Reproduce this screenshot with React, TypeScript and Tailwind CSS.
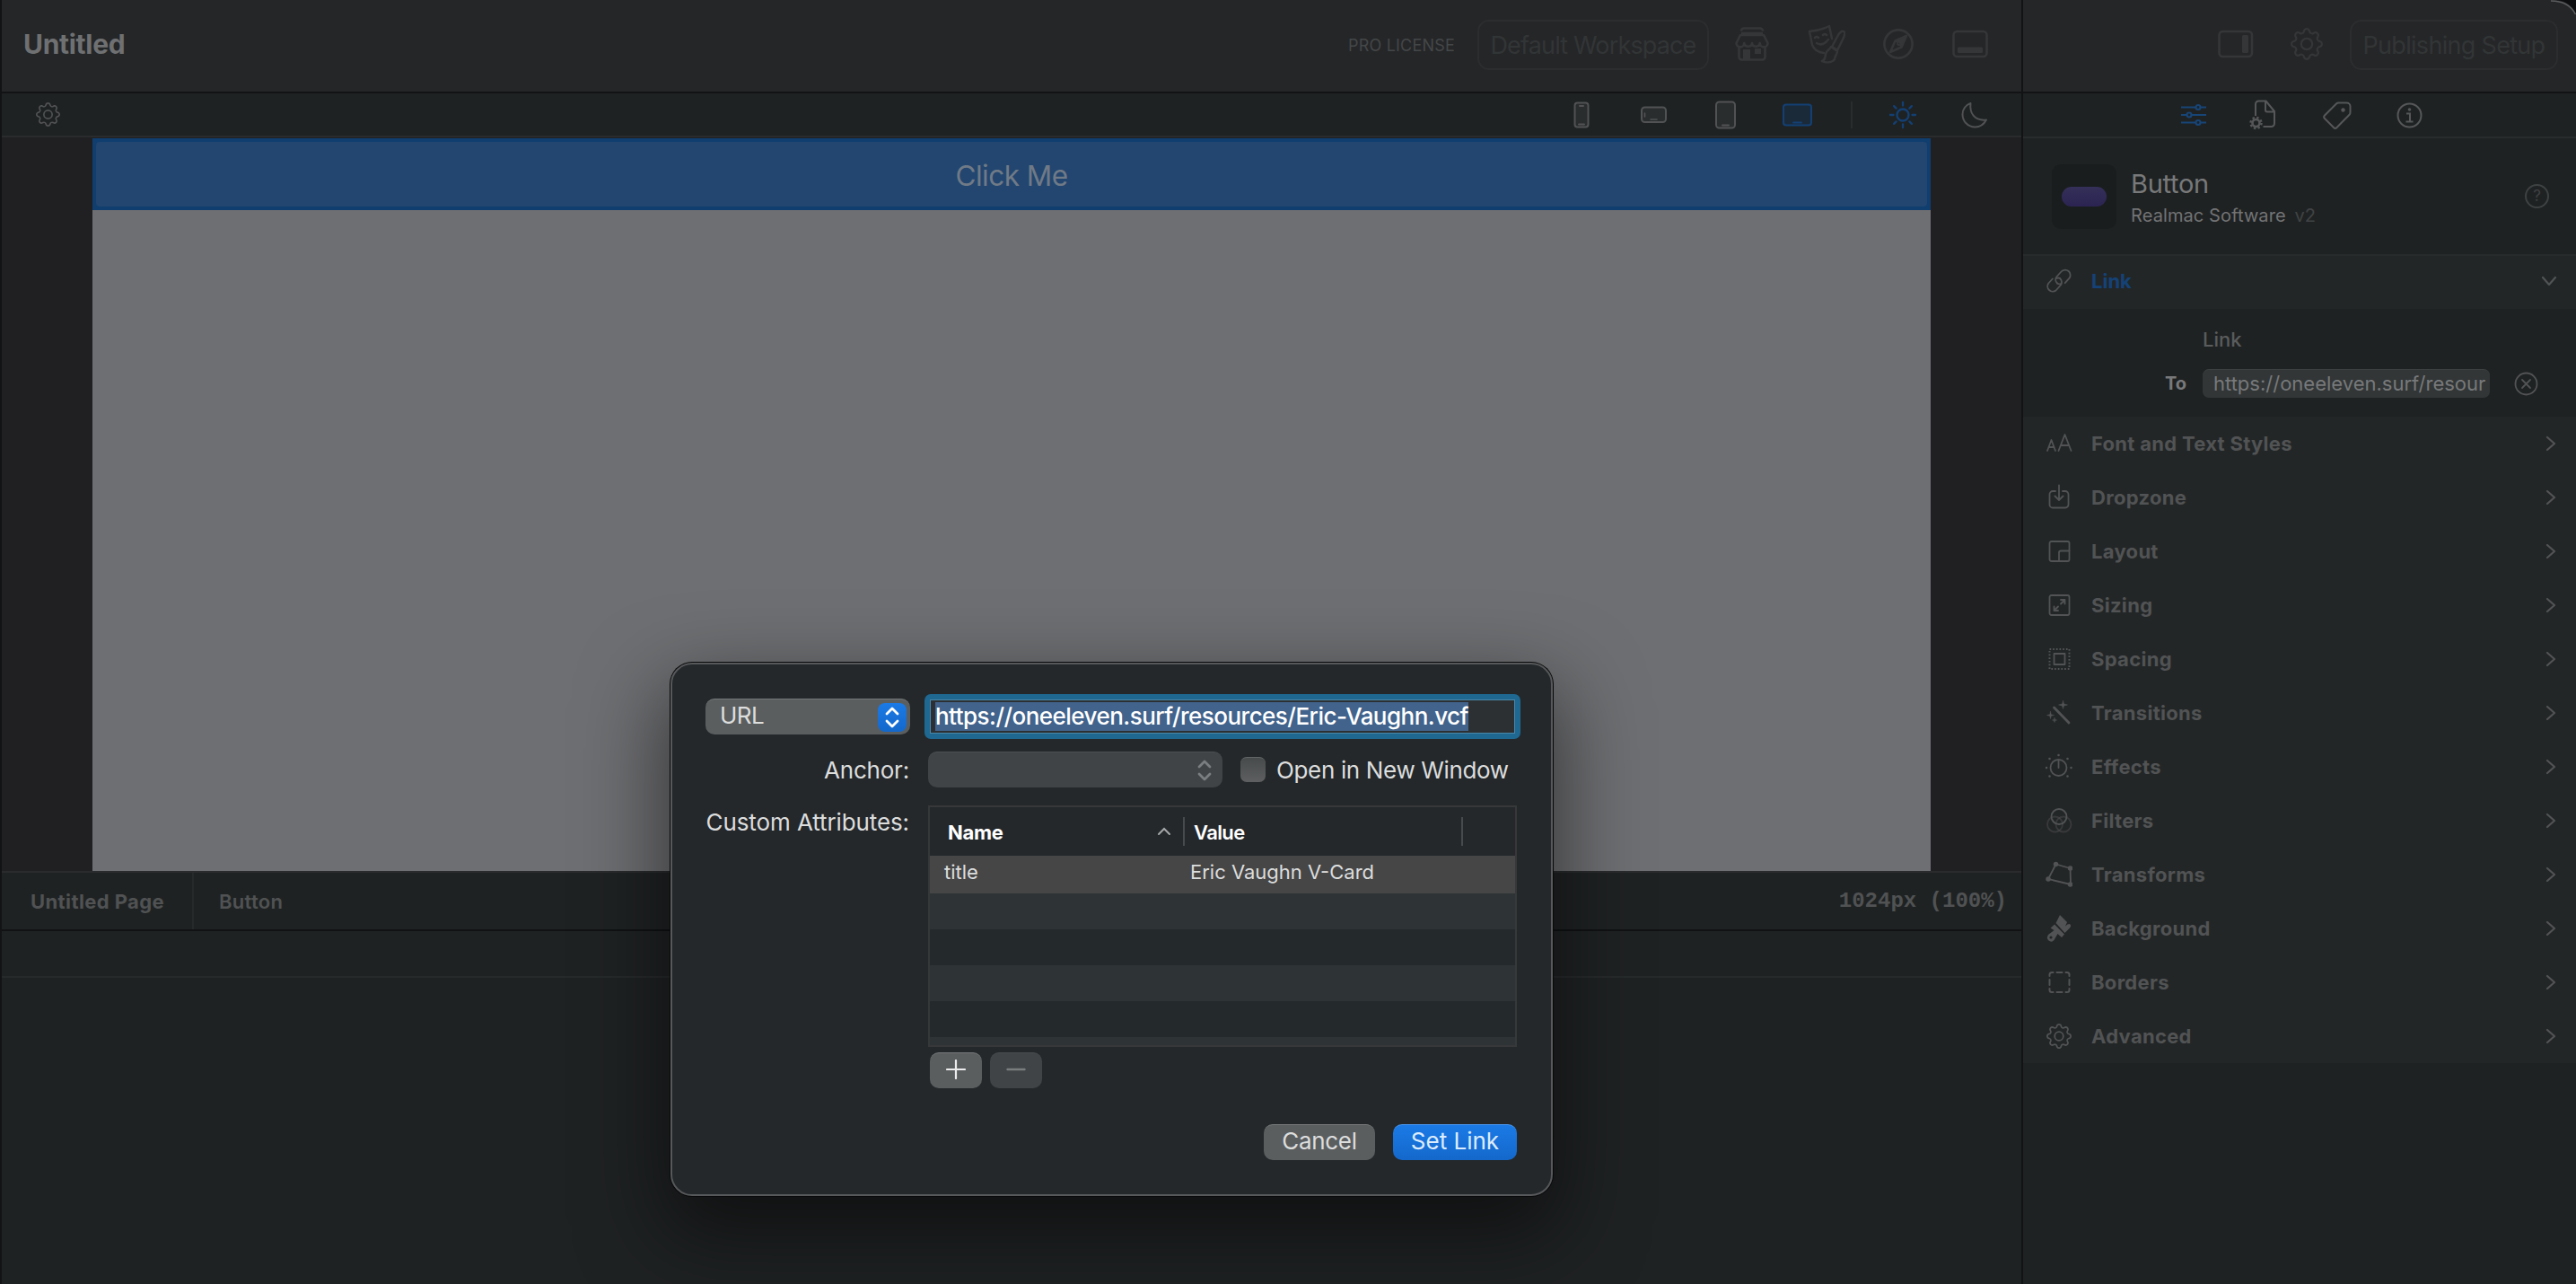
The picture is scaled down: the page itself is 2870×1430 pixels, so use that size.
import React, { useState } from 'react';
import { BsGear } from 'react-icons/bs';

interface IconProps {
  className?: string;
}

const StoreIcon = () => (
  <svg width="38" height="38" viewBox="0 0 38 38" fill="none" stroke="currentColor" strokeWidth="2.6" strokeLinejoin="round">
    <path d="M7 4.500a3 3 0 0 1 3-3h18a3 3 0 0 1 3 3M7 7h24M6 9h26l4.500 9a4.400 4.400 0 0 1-8.800 0 4.400 4.400 0 0 1-8.700 0 4.400 4.400 0 0 1-8.700 0 4.400 4.400 0 0 1-8.800 0z" />
    <path d="M4.500 22v11.500a3 3 0 0 0 3 3h23a3 3 0 0 0 3-3V22" />
    <path d="M9 25h8v11H9zM22 24h7v6h-7z" fill="currentColor" stroke="none" />
  </svg>
);

const ThemeIcon = () => (
  <svg width="42" height="44" viewBox="0 0 42 44" fill="none" stroke="currentColor" strokeWidth="2.5" strokeLinecap="round" strokeLinejoin="round">
    <path d="M2 8Q14 7 24 2l3 14M2 8l3 15q3 8 13 9" />
    <path d="M8 15q2-2 4 0M17 12q2-2 4 0M10 21q7 4 13-4" />
    <path d="M40 8c2 1 1 5-1 9l-6 12-6-4 7-13c2-3 4-5 6-4zM26 25l7 5c0 4-3 5-3 9-3 4-9 4-14 2 5-2 3-5 4-8 1-4 4-4 6-8z" />
  </svg>
);

const CompassIcon = () => (
  <svg width="36" height="36" viewBox="0 0 36 36" fill="none" stroke="currentColor" strokeWidth="2.6" strokeLinejoin="round">
    <circle cx="18" cy="18" r="15.600" />
    <path d="M27 9l-5.500 12.500L9 27l5.500-12.500z" />
    <path d="M27 9l-6 12-6-6zM18 16.500a1.500 1.500 0 1 0 .1 0z" fill="currentColor" strokeWidth="1" />
  </svg>
);

const BottomPanelIcon = () => (
  <svg width="40" height="32" viewBox="0 0 40 32" fill="none" stroke="currentColor" strokeWidth="2.6">
    <rect x="1.500" y="2" width="37" height="28" rx="4" />
    <rect x="6" y="19.500" width="28" height="6.500" rx="1.500" fill="currentColor" stroke="none" />
  </svg>
);

const SidePanelIcon = () => (
  <svg width="40" height="32" viewBox="0 0 40 32" fill="none" stroke="currentColor" strokeWidth="2.6">
    <rect x="1.500" y="2" width="36.500" height="28" rx="4" />
    <rect x="27" y="6" width="7" height="20" rx="1.500" fill="currentColor" stroke="none" />
  </svg>
);

const PhoneIcon = () => (
  <svg width="18" height="30" viewBox="0 0 18 30" fill="none" stroke="currentColor" strokeWidth="2">
    <rect x="1.500" y="1.500" width="15" height="27" rx="3" fill="#2a2d2e" />
    <path d="M7 5h4M6 25.500h6" strokeLinecap="round" />
  </svg>
);

const PhoneLandscapeIcon = () => (
  <svg width="29" height="20" viewBox="0 0 29 20" fill="none" stroke="currentColor" strokeWidth="2">
    <rect x="1" y="1.500" width="27" height="16.500" rx="3.500" fill="#2a2d2e" />
    <path d="M4.500 8v4M11 15h7" strokeWidth="1.600" strokeLinecap="round" />
  </svg>
);

const TabletIcon = () => (
  <svg width="23" height="32" viewBox="0 0 23 32" fill="none" stroke="currentColor" strokeWidth="2">
    <rect x="1" y="1.500" width="21" height="29" rx="3.500" fill="#2a2d2e" />
    <path d="M8 27.500h7" strokeLinecap="round" />
  </svg>
);

const DesktopIcon = () => (
  <svg width="33" height="26" viewBox="0 0 33 26" fill="none" stroke="currentColor" strokeWidth="2">
    <rect x="1" y="1.500" width="31" height="23" rx="3" fill="#1b2a39" />
    <path d="M12 21.500h9" strokeLinecap="round" />
  </svg>
);

const SunIcon = () => (
  <svg width="32" height="32" viewBox="0 0 32 32" fill="none" stroke="currentColor" strokeWidth="2.300" strokeLinecap="round">
    <circle cx="16" cy="16" r="6.500" />
    <path d="M16 2v3.500M16 26.500V30M2 16h3.500M26.500 16H30M6.100 6.100l2.500 2.500M23.400 23.400l2.500 2.500M6.100 25.900l2.500-2.500M23.400 8.600l2.500-2.500" />
  </svg>
);

const MoonIcon = () => (
  <svg width="30" height="30" viewBox="0 0 30 30" fill="none" stroke="currentColor" strokeWidth="2" strokeLinejoin="round">
    <path d="M10.500 2C9 13 15 22 28 20.500 25 26 20.500 28.500 15.500 28.500 7.500 28.500 1.500 22 1.500 14.500 1.500 9 5 4 10.500 2z" />
  </svg>
);

const SlidersIcon = () => (
  <svg width="28" height="26" viewBox="0 0 28 26" fill="none" stroke="currentColor" strokeWidth="2.200">
    <path d="M0 4.500h16M22 4.500h6M0 13h6M12 13h16M0 21.500h16M22 21.500h6" />
    <circle cx="19" cy="4.500" r="2.500" />
    <circle cx="9" cy="13" r="2.500" />
    <circle cx="19" cy="21.500" r="2.500" />
  </svg>
);

const PageGearIcon = () => (
  <svg width="30" height="34" viewBox="0 0 30 34" fill="none" stroke="currentColor" strokeWidth="2" strokeLinejoin="round">
    <path d="M7 18V5a3.500 3.500 0 0 1 3.500-3.500h8L28 13v13.500a3.500 3.500 0 0 1-3.500 3.500H15.500M18 2v9.500q0 2 2 2h8" />
    <circle cx="7.500" cy="26" r="4" strokeWidth="2.600" />
    <circle cx="7.500" cy="26" r="6" strokeWidth="2.400" strokeDasharray="2.350 2.360" />
  </svg>
);

const TagIcon = () => (
  <svg width="32" height="32" viewBox="0 0 32 32" fill="none" stroke="currentColor" strokeWidth="2" strokeLinejoin="round">
    <path d="M17.500 2.500h9a4 4 0 0 1 4 4v6.500a4 4 0 0 1-1.200 3L15.500 30a2.500 2.500 0 0 1-3.500 0L2 20a2.500 2.500 0 0 1 0-3.500L15 3.500q1-1 2.500-1z" />
    <circle cx="22.500" cy="10.500" r="2.200" fill="currentColor" stroke="none" />
  </svg>
);

const InfoIcon = () => (
  <svg width="29" height="29" viewBox="0 0 29 29" fill="none" stroke="currentColor" strokeWidth="2">
    <circle cx="14.500" cy="14.500" r="13" />
    <path d="M11 12.500h4v9M10.500 21.500h8" />
    <circle cx="14.500" cy="8" r="1.800" fill="currentColor" stroke="none" />
  </svg>
);

const ClearIcon = () => (
  <svg width="27" height="27" viewBox="0 0 27 27" fill="none" stroke="currentColor" strokeWidth="1.800" strokeLinecap="round">
    <circle cx="13.500" cy="13.500" r="12" />
    <path d="M9 9l9 9M18 9l-9 9" />
  </svg>
);

const ChevronRight = () => (
  <svg width="12" height="18" viewBox="0 0 12 18" fill="none" stroke="currentColor" strokeWidth="2.200" strokeLinecap="round" strokeLinejoin="round">
    <path d="M2 2l8 7-8 7" />
  </svg>
);

const ChevronDown = () => (
  <svg width="18" height="12" viewBox="0 0 18 12" fill="none" stroke="currentColor" strokeWidth="2.200" strokeLinecap="round" strokeLinejoin="round">
    <path d="M2 2l7 8 7-8" />
  </svg>
);

const UpDown = ({ className }: IconProps) => (
  <svg width="18" height="24" viewBox="0 0 18 24" fill="none" stroke="currentColor" strokeWidth="2.800" strokeLinecap="round" strokeLinejoin="round" className={className}>
    <path d="M3 8l6-6 6 6M3 16l6 6 6-6" />
  </svg>
);

const Svg: React.FC<{ children: React.ReactNode }> = ({ children }) => (
  <svg width="30" height="30" viewBox="0 0 30 30" fill="none" stroke="currentColor" strokeWidth="1.800" strokeLinecap="round" strokeLinejoin="round">
    {children}
  </svg>
);

const LinkIcon = () => (
  <Svg>
    <path d="M13 17.500a5.500 5.500 0 0 1-.5-7.500l5-5.500a5.800 5.800 0 0 1 8.700 7.700l-4.500 5" />
    <path d="M16 12a5.500 5.500 0 0 1 .5 8l-5 5.500A5.800 5.800 0 0 1 3.300 17.500l4.500-5" />
    <path d="M13 17.500q2 1.500 4 .5M16 12q-2-1-3.500 0" />
  </Svg>
);

const groups = [
  {
    label: 'Font and Text Styles',
    icon: (
      <Svg>
        <path d="M2 23l4.500-12L11 23M3.500 19h6M14.500 23l7-18 7 18M17 17h9" />
      </Svg>
    )
  },
  {
    label: 'Dropzone',
    icon: (
      <Svg>
        <path d="M11 8H8a3.500 3.500 0 0 0-3.500 3.500V23A3.500 3.500 0 0 0 8 26.500h14a3.500 3.500 0 0 0 3.500-3.500V11.500A3.500 3.500 0 0 0 22 8h-3M15 1.500v16M10.500 13.500l4.500 4.500 4.500-4.500" />
      </Svg>
    )
  },
  {
    label: 'Layout',
    icon: (
      <Svg>
        <rect x="4.500" y="4" width="22" height="22" rx="2" />
        <path d="M15 26V16.500q0-2 2-2h9.500" />
      </Svg>
    )
  },
  {
    label: 'Sizing',
    icon: (
      <Svg>
        <rect x="4.500" y="4" width="22" height="22" rx="2" />
        <path d="M17 13.500l4.500-4.500M17 9h4.500v4.500M14 16.500L9.500 21M9.500 16.500V21H14" />
      </Svg>
    )
  },
  {
    label: 'Spacing',
    icon: (
      <Svg>
        <rect x="4.500" y="4" width="22" height="22" strokeDasharray="1.700 1.970" strokeLinecap="butt" strokeWidth="2" />
        <rect x="9.500" y="9" width="12" height="12" />
      </Svg>
    )
  },
  {
    label: 'Transitions',
    icon: (
      <Svg>
        <path d="M9.500 9l16.500 17" strokeWidth="2.800" />
        <path d="M19.500 1.500l1 3.500 4 1-4 1-1 3.500-1-3.500-4-1 4-1zM5.500 13.500l.8 3.200 3.200.8-3.200.8-.8 3.200-.8-3.200-3.200-.8 3.200-.8zM10 20.500l.6 1.900 1.900.6-1.900.6-.6 1.900-.6-1.900-1.900-.6 1.900-.6z" fill="currentColor" strokeWidth=".5" />
      </Svg>
    )
  },
  {
    label: 'Effects',
    icon: (
      <Svg>
        <circle cx="14.500" cy="16" r="9" />
        <path d="M14.500 7.500V16" />
        <path d="M14.500 2h.01M4.500 6h.01M24.500 6h.01M1 16h.01M28.500 16h.01M4.500 25.500h.01M24.500 25.500h.01" strokeWidth="2.600" />
      </Svg>
    )
  },
  {
    label: 'Filters',
    icon: (
      <Svg>
        <circle cx="10.500" cy="19" r="8.500" opacity=".45" />
        <circle cx="20" cy="19" r="8.500" opacity=".45" />
        <circle cx="15" cy="10.500" r="8.500" />
      </Svg>
    )
  },
  {
    label: 'Transforms',
    icon: (
      <Svg>
        <path d="M11.500 3.500L27.500 8l.5 18L3 20z" />
        <path d="M11.500 3.500h.01M27.500 8h.01M27.500 26h.01M3 20h.01" strokeWidth="5.500" />
      </Svg>
    )
  },
  {
    label: 'Background',
    icon: (
      <Svg>
        <path d="M16 0L24 8 22 12.500q4-3.500 5.500-2 1.500 2-1 4.500l-5 5L11.500 9z" fill="currentColor" stroke="none" />
        <path d="M10 10.500l11 11-3 3.500-4.500-4-4 7q-3 3-6 .500t-.5-6.500L9.500 17 5.500 14.500z" fill="currentColor" stroke="none" />
        <circle cx="6" cy="25" r="1.600" fill="#232627" stroke="none" />
      </Svg>
    )
  },
  {
    label: 'Borders',
    icon: (
      <Svg>
        <path d="M4.500 8V6.500q0-2.500 2.500-2.500h1.500M22.500 4H24q2.500 0 2.500 2.500V8M26.500 22v1.500q0 2.500-2.500 2.500h-1.500M8.500 26H7q-2.500 0-2.500-2.500V22M12.500 4h6M12.500 26h6M4.500 12v6M26.500 12v6" strokeWidth="2" />
      </Svg>
    )
  },
  {
    label: 'Advanced',
    icon: <BsGear className="size-7" />
  }
];

const stripes = ['bg-[#2e3335]', 'bg-[#24292b]', 'bg-[#2e3335]', 'bg-[#24292b]'];

const LinkDialog: React.FC = () => {
  const [url] = useState<string>('https://oneeleven.surf/resources/Eric-Vaughn.vcf');

  return (
    <div className="absolute left-[747px] top-[738px] w-[983px] h-[594px] rounded-[24px] border-2 border-[#56585a] bg-[#24282b] text-[#dcdddd] text-[26px] leading-none shadow-[0_0_0_1px_#08090a,0_36px_90px_10px_rgba(0,0,0,0.5)]">
      {/* Destination */}
      <div className="flex items-center pl-[37px] pt-[33px]">
        <div className="w-[228px] h-[40px] rounded-[10px] bg-[#5b5e5f] border-t border-[#767879] flex items-center justify-between pl-[16px] pr-1">
          <span className="pb-[3px] tracking-[-0.6px]">URL</span>
          <span className="size-[32px] rounded-[8px] bg-linear-to-b from-[#1b7ae6] to-[#1468cb] text-white flex items-center justify-center">
            <UpDown />
          </span>
        </div>
        <div className="ml-4 w-[664px] h-[50px] rounded-[7px] bg-[#1f6892] p-[6px]">
          <div className="h-[38px] border border-[#4b87a8] bg-[#2c3032] flex items-center pl-[5px]">
            <span className="h-8 flex items-center bg-[#41638c] text-white font-medium tracking-[-0.53px] whitespace-nowrap">
              {url}
            </span>
          </div>
        </div>
      </div>

      {/* Anchor */}
      <div className="flex items-center mt-[14px] pl-[37px]">
        <span className="w-[227px] text-right tracking-[-0.2px] pt-px">Anchor:</span>
        <div className="ml-[21px] w-[328px] h-[40px] rounded-[10px] bg-[#404446] border-t border-[#4b4f51] flex items-center justify-end pr-[11px]">
          <UpDown className="text-[#7b7e80]" />
        </div>
        <span className="ml-5 size-[28px] rounded-[7px] bg-linear-to-b from-[#484b4c] to-[#5d5f60] border-t border-[#636667]" />
        <span className="ml-[12px] pt-px tracking-[-0.35px]">Open in New Window</span>
      </div>

      {/* Attributes table */}
      <div className="flex mt-5 pl-[37px]">
        <span className="w-[227px] pt-[6px] flex justify-end tracking-[-0.1px] whitespace-nowrap">Custom Attributes:</span>
        <div className="ml-[21px] w-[656px] h-[269px] border-2 border-[#363839] overflow-hidden text-[22px]">
          <div className="h-[54px] flex items-center text-white">
            <span className="w-[233px] pl-[20px] pt-px font-bold tracking-[-0.3px]">Name</span>
            <svg width="16" height="10" viewBox="0 0 16 10" fill="none" stroke="#a5a7a8" strokeWidth="2" strokeLinecap="round" className="ml-5">
              <path d="M2 8l6-6 6 6" />
            </svg>
            <span className="ml-[13px] w-[2px] h-[32px] bg-[#484b4d]" />
            <span className="w-[308px] pl-[10px] pt-px font-semibold tracking-[-0.6px]">Value</span>
            <span className="w-[2px] h-[32px] bg-[#484b4d]" />
          </div>
          <div className="h-[42px] bg-[#464646] flex items-start pt-[7px]">
            <span className="w-[290px] pl-4">title</span>
            <span>Eric Vaughn V-Card</span>
          </div>
          {stripes.map((stripe, i) => (
            <div key={i} className={`h-[40px] ${stripe}`} />
          ))}
          <div className="h-[10px] bg-[#2e3335]" />
        </div>
      </div>

      <div className="flex gap-[9px] mt-[6px] pl-[287px]">
        <button className="w-[58px] h-[40px] rounded-[10px] bg-[#5b5e5f] border-t border-[#767879] flex items-center justify-center pb-[3px]">
          <svg width="22" height="22" viewBox="0 0 22 22" stroke="#ececec" strokeWidth="2.200" strokeLinecap="round">
            <path d="M11 1v20M1 11h20" />
          </svg>
        </button>
        <button className="w-[58px] h-[40px] rounded-[10px] bg-[#404446] border-t border-[#484c4e] flex items-center justify-center pb-[3px]">
          <svg width="22" height="22" viewBox="0 0 22 22" stroke="#7a7d7e" strokeWidth="2.400" strokeLinecap="round">
            <path d="M1.500 11h19" />
          </svg>
        </button>
      </div>

      {/* Actions */}
      <div className="flex justify-end gap-5 mt-[40px] pr-[38px]">
        <button className="w-[124px] h-[40px] rounded-[10px] bg-[#5b5e5f] border-t border-[#767879] pb-[3px] tracking-[-0.3px]">Cancel</button>
        <button className="w-[138px] h-[40px] rounded-[10px] bg-linear-to-b from-[#1b7ae6] to-[#1468cb] border-t border-[#4a96ec] pb-[3px] text-[#dcecff]">Set Link</button>
      </div>
    </div>
  );
};

const Inspector: React.FC = () => (
  <aside className="w-[616px] h-full flex flex-col bg-[#1f2223] text-[#515354] leading-none">
    <div className="h-[102px] bg-[#252628] border-b-2 border-[#121314] box-content flex items-center justify-end pr-5 pb-0 text-[#343637]">
      <span className="pb-[4px]"><SidePanelIcon /></span>
      <BsGear className="size-9 ml-[41px] mr-[30px] mb-[4px]" />
      <button className="mb-[2px] w-[232px] h-[56px] rounded-[13px] border-2 border-[#2b2d2e] text-[27px] text-[#323536] tracking-[-0.7px] whitespace-nowrap">Publishing Setup</button>
    </div>
    <div className="h-[50px] border-b-2 border-[#292c2d] flex items-center pl-[176px] text-[#555758]">
      <span className="text-[#174577]"><SlidersIcon /></span>
      <span className="ml-12"><PageGearIcon /></span>
      <span className="ml-[52px]"><TagIcon /></span>
      <span className="ml-[50px]"><InfoIcon /></span>
    </div>

    {/* Selected component */}
    <div className="h-[131px] border-b-2 border-[#282b2c] flex items-center pl-8 pr-[30px]">
      <div className="size-[72px] rounded-[10px] bg-[#1a1d1e] flex items-center justify-center">
        <div className="w-[50px] h-[22px] rounded-full bg-linear-to-b from-[#343059] to-[#2b2452]" />
      </div>
      <div className="ml-[16px] pt-[2px] flex-1">
        <div className="text-[29px] text-[#78797a] tracking-[-0.3px]">Button</div>
        <div className="mt-[11px] text-[20px] text-[#727374] tracking-[0.1px]">
          Realmac Software <span className="ml-1 text-[#404344]">v2</span>
        </div>
      </div>
      <span className="size-[27px] rounded-full border-2 border-[#3f4243] text-[#3f4243] text-[17px] flex items-center justify-center">?</span>
    </div>

    <div className="h-[59px] bg-[#232627] flex items-center pl-[25px] pr-[21px] pb-[3px]">
      <LinkIcon />
      <span className="ml-[21px] flex-1 text-[22px] font-bold text-[#144277]">Link</span>
      <ChevronDown />
    </div>
    <div className="h-[120px] text-[22px]">
      <div className="pt-[23px] pl-[200px] font-medium text-[#5a5c5d]">Link</div>
      <div className="mt-[22px] flex items-center">
        <span className="w-[182px] text-right text-[20px] font-bold text-[#78797a]">To</span>
        <span className="ml-[18px] w-[320px] h-[32px] rounded-[7px] bg-[#323637] border-t border-[#3d4041] pl-3 pb-px flex items-center overflow-hidden whitespace-nowrap text-[#77797a]">
          https://oneeleven.surf/resour
        </span>
        <span className="ml-[27px]"><ClearIcon /></span>
      </div>
    </div>

    {/* Collapsed groups */}
    {groups.map((group) => (
      <div key={group.label} className="h-[60px] bg-[#232627] flex items-center pl-[25px] pr-[22px]">
        <span className="w-[30px] flex justify-center">{group.icon}</span>
        <span className="ml-[21px] flex-1 text-[22px] font-bold tracking-[0.3px]">{group.label}</span>
        <ChevronRight />
      </div>
    ))}
  </aside>
);

const App: React.FC = () => {
  return (
    <div className="relative w-[2870px] h-[1430px] overflow-hidden flex bg-[#121314] font-[Inter,sans-serif]">
      <main className="ml-[2px] mr-[2px] w-[2250px] h-full flex flex-col bg-[#1f2223] leading-none">
        {/* Window toolbar */}
        <header className="h-[102px] bg-[#252628] border-b-2 border-[#121314] box-content flex items-center pl-[24px] pr-[37px] pb-0 text-[#343637]">
          <h1 className="flex-1 text-[30px] font-bold text-[#6f7072] tracking-[-0.3px] pb-1">Untitled</h1>
          <span className="text-[18px] text-[#444748] tracking-[0.2px]">PRO LICENSE</span>
          <button className="mb-[2px] ml-[25px] mr-[29px] w-[258px] h-[56px] rounded-[13px] border-2 border-[#2b2d2e] text-[27px] text-[#323536] tracking-[-0.85px] whitespace-nowrap">Default Workspace</button>
          <span className="pb-[4px]"><StoreIcon /></span>
          <span className="ml-[43px] pb-[4px]"><ThemeIcon /></span>
          <span className="ml-[41px] pb-[4px]"><CompassIcon /></span>
          <span className="ml-[42px] pb-[4px]"><BottomPanelIcon /></span>
        </header>

        {/* Canvas toolbar */}
        <div className="h-[49px] border-b-2 border-[#292b2c] flex items-center pl-[38px] pr-[37px] text-[#505253]">
          <BsGear className="size-[27px]" />
          <span className="ml-auto"><PhoneIcon /></span>
          <span className="ml-[57px]"><PhoneLandscapeIcon /></span>
          <span className="ml-[54px]"><TabletIcon /></span>
          <span className="ml-[52px] text-[#134074]"><DesktopIcon /></span>
          <span className="ml-[43px] w-[2px] h-[30px] bg-[#2a2d2e]" />
          <span className="ml-10 text-[#134074]"><SunIcon /></span>
          <span className="ml-[49px]"><MoonIcon /></span>
        </div>

        <div className="h-[817px] bg-[#202022] pt-px pl-[101px] pr-[101px] flex">
          <div className="w-[2048px] bg-[#6e6f72]">
            <div className="h-[80px] bg-[#0f3e6f] p-1">
              <div className="h-full rounded-[4px] bg-[#22466f] flex items-center justify-center pt-[3px] text-[31.5px] text-[#707a87] tracking-[-0.5px]">
                Click Me
              </div>
            </div>
          </div>
        </div>

        {/* Breadcrumb */}
        <div className="h-[67px] border-t-2 border-b-2 border-t-[#292b2c] border-b-[#101213] flex items-center text-[22px] font-bold text-[#505253]">
          <span className="w-[212px] pl-8 tracking-[0.4px] whitespace-nowrap">Untitled Page</span>
          <span className="w-[2px] h-full bg-[#272a2b]" />
          <span className="flex-1 pl-[28px] font-semibold tracking-[0.3px]">Button</span>
          <span className="pr-[16px] font-['Liberation_Mono',monospace] text-[24px] whitespace-pre">1024px (100%)</span>
        </div>
        <div className="h-[52px] border-b-2 border-[#272a2b]" />
      </main>

      <Inspector />
      <LinkDialog />

      {/* Rounded window corner */}
      <svg width="32" height="32" viewBox="0 0 32 32" fill="none" className="absolute right-0 top-0">
        <path d="M8 0Q25 0 32 16V0z" fill="#0c0d0e" />
        <path d="M4 1Q24 1 31.500 16" stroke="#5a5b5c" strokeWidth="1.600" />
      </svg>
    </div>
  );
};

export default App;
